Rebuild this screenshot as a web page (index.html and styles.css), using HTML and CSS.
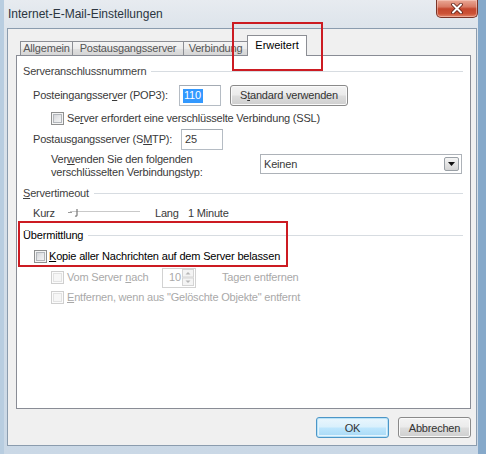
FILE: index.html
```html
<!DOCTYPE html>
<html lang="de">
<head>
<meta charset="utf-8">
<title>Internet-E-Mail-Einstellungen</title>
<link rel="stylesheet" href="styles.css">
</head>
<body>
<div class="window">
  <div class="titlebar">
    <span class="title">Internet-E-Mail-Einstellungen</span>
    <span class="close">
      <svg width="12" height="11" viewBox="0 0 12 11">
        <path d="M2 1.5 L10 9.5 M10 1.5 L2 9.5" stroke="#5a1d14" stroke-width="3.6" stroke-linecap="round"/>
        <path d="M2 1.5 L10 9.5 M10 1.5 L2 9.5" stroke="#ffffff" stroke-width="2" stroke-linecap="round"/>
      </svg>
    </span>
  </div>
  <div class="client">
    <div class="tabs">
      <div class="tab t1">Allgemein</div>
      <div class="tab t2">Postausgangsserver</div>
      <div class="tab t3">Verbindung</div>
      <div class="tab t4 active">Erweitert</div>
    </div>
    <div class="panel">
      <div class="group"><span>Serveranschlussnummern</span></div>

      <div class="row row-pop">
        <span class="lbl lbl-pop">Posteingangsser<u>v</u>er (POP3):</span>
        <span class="input"><span class="sel">110</span></span>
        <span class="btn btn-std">S<u>t</u>andard verwenden</span>
      </div>

      <div class="row row-check">
        <span class="cb"></span>
        <span>Se<u>r</u>ver erfordert eine verschlüsselte Verbindung (SSL)</span>
      </div>

      <div class="row row-smtp">
        <span class="lbl lbl-smtp">Postausgangsserver (S<u>M</u>TP):</span>
        <span class="input">25</span>
      </div>

      <div class="row row-enc">
        <span class="enc-text">Ver<u>w</u>enden Sie den folgenden<br>verschlüsselten Verbindungstyp:</span>
        <span class="combo">
          <span class="combo-val">Keinen</span>
          <span class="combo-btn">
            <svg width="7" height="4" viewBox="0 0 7 4"><path d="M0 0 H7 L3.5 4 Z" fill="#111"/></svg>
          </span>
        </span>
      </div>

      <div class="group gap-timeout"><span><u>S</u>ervertimeout</span></div>

      <div class="row row-slider">
        <span class="kurz">Kurz</span>
        <svg class="slider" width="72" height="14" viewBox="0 0 72 14">
          <line x1="2" y1="5.5" x2="72" y2="5.5" stroke="#c9c9c9" stroke-width="1"/>
          <line x1="0" y1="6.5" x2="4" y2="6.5" stroke="#9a9a9a" stroke-width="1"/>
          <path d="M9 3 V9 Q9 10.5 7 10" stroke="#777" stroke-width="1.2" fill="none"/>
        </svg>
        <span class="lang">Lang</span>
        <span class="minute">1 Minute</span>
      </div>

      <div class="group gap-ueb sharp"><span>Übermittlung</span></div>

      <div class="row row-kopie sharp">
        <span class="cb"></span>
        <span><u>K</u>opie aller Nachrichten auf dem Server belassen</span>
      </div>

      <div class="row row-vom disabled">
        <span class="cb cb-dis"></span>
        <span class="lbl-vom">Vom Server <u>n</u>ach</span>
        <span class="spin">
          <span class="spin-val">10</span>
          <svg class="spin-btns" width="12" height="17" viewBox="0 0 12 17">
            <rect x="0.5" y="0.5" width="11" height="7.5" fill="#f4f4f4" stroke="#d4d4d4"/>
            <rect x="0.5" y="9" width="11" height="7.5" fill="#f4f4f4" stroke="#d4d4d4"/>
            <path d="M3.5 5.5 L6 3 L8.5 5.5 Z" fill="#b5b5b5"/>
            <path d="M3.5 11.5 L6 14 L8.5 11.5 Z" fill="#b5b5b5"/>
          </svg>
        </span>
        <span class="tagen">Tagen entfernen</span>
      </div>

      <div class="row row-entf disabled">
        <span class="cb cb-dis"></span>
        <span><u>E</u>ntfernen, wenn aus "Gelöschte Objekte" entfernt</span>
      </div>
    </div>
    <div class="buttons">
      <span class="btn btn-ok">OK</span>
      <span class="btn">Abbrechen</span>
    </div>
  </div>
  <div class="mark mark-tab"></div>
  <div class="mark mark-ueb"></div>
</div>
</body>
</html>
```
FILE: styles.css
```css
* { box-sizing: border-box; }

body {
  margin: 0;
  font-family: "Liberation Sans", Arial, sans-serif;
  font-size: 11px;
  letter-spacing: -0.2px;
  color: #3a3a3a;
}

u { text-decoration: underline; text-underline-offset: 1px; }

.window {
  position: relative;
  width: 486px;
  height: 454px;
  padding: 0 9px 8px 7px;
  display: flex;
  flex-direction: column;
  background: linear-gradient(180deg, #e7ebf0 0, #dde4eb 28px, #cad8e6 100%);
  box-shadow: inset -8px 0 0 #86a9ca, inset 4px 0 0 #b8cde0;
}

.titlebar {
  height: 28px;
  display: flex;
  align-items: flex-start;
  padding-left: 1px;
}

.title {
  margin-top: 7px;
  font-size: 12px;
  line-height: 14px;
  letter-spacing: 0;
  color: #2b3540;
}

.close {
  margin-left: auto;
  margin-right: -1px;
  width: 42px;
  height: 18px;
  border: 1px solid #7a3428;
  border-top: none;
  border-radius: 0 0 5px 5px;
  background: linear-gradient(180deg, #eaa896 0, #d97a64 40%, #c4472e 52%, #cc5236 80%, #e3866a 100%);
  box-shadow: inset 0 0 0 1px rgba(255, 220, 210, 0.45);
  display: flex;
  align-items: center;
  justify-content: center;
}

.client {
  flex: 1;
  background: #f0f0f0;
  border: 1px solid #8b9cae;
  padding: 6px 0 6px 8px;
  display: flex;
  flex-direction: column;
}

.tabs {
  display: flex;
  align-items: flex-end;
  height: 20px;
  padding-left: 4px;
}

.tab {
  height: 14px;
  margin-right: -1px;
  border: 1px solid #8c8e94;
  border-bottom: none;
  background: linear-gradient(180deg, #f4f4f4 0, #ececec 50%, #e0e0e0 51%, #d6d6d6 100%);
  color: #555;
  line-height: 12px;
  text-align: center;
  white-space: nowrap;
}

.t1 { width: 53px; }
.t2 { width: 112px; }
.t3 { width: 65px; }
.t4 { width: 60px; }

.tab.active {
  height: 21px;
  margin-bottom: -1px;
  position: relative;
  z-index: 1;
  background: #ffffff;
  color: #000;
  letter-spacing: 0;
  line-height: 19px;
}

.panel {
  width: 455px;
  height: 354px;
  background: #ffffff;
  border: 1px solid #898c95;
  padding: 8px 7px 0 6px;
}

.group {
  display: flex;
  align-items: center;
  height: 14px;
  line-height: 14px;
  color: #3f3f3f;
}

.group::after {
  content: "";
  flex: 1;
  height: 1px;
  margin-left: 5px;
  background: #d7dce1;
}

.row {
  display: flex;
  align-items: center;
  line-height: 13px;
  white-space: nowrap;
}

.row-pop { height: 21px; margin-top: 7px; padding-left: 10px; }
.lbl-pop { width: 146px; }
.row-check { height: 14px; margin-top: 5px; padding-left: 28px; gap: 3px; }
.row-smtp { height: 21px; margin-top: 4px; padding-left: 10px; }
.lbl-smtp { width: 148px; }
.row-enc { height: 26px; margin-top: 3px; padding-left: 28px; align-items: flex-start; }
.gap-timeout { margin-top: 7px; }
.row-slider { height: 14px; margin-top: 6px; padding-left: 10px; }
.gap-ueb { margin-top: 8px; }
.row-kopie { height: 14px; margin-top: 7px; padding-left: 11px; gap: 2px; }
.row-vom { height: 21px; margin-top: 4px; padding-left: 28px; }
.row-entf { height: 14px; margin-top: 2px; padding-left: 28px; gap: 3px; }

.sharp { color: #000; letter-spacing: -0.17px; }
.disabled { color: #a9a9a9; }

.input {
  width: 42px;
  height: 21px;
  border: 1px solid #b5bcc4;
  border-top-color: #a4abb3;
  background: #fff;
  padding: 3px 0 0 3px;
  line-height: 13px;
}

.sel {
  display: inline-block;
  background: #3399ff;
  color: #fff;
  padding: 0 2px 1px 1px;
}

.btn {
  display: flex;
  align-items: center;
  justify-content: center;
  width: 73px;
  height: 21px;
  border: 1px solid #8a8a8a;
  border-radius: 3px;
  background: linear-gradient(180deg, #f3f3f3 0, #ebebeb 48%, #dddddd 52%, #cfcfcf 100%);
  box-shadow: inset 0 0 0 1px #fafafa;
  color: #333;
}

.btn-std { width: 118px; margin-left: 9px; }

.btn-ok {
  border-color: #4c96c7;
  background: linear-gradient(180deg, #eaf6fd 0, #d9f0fc 48%, #bee6fd 52%, #a7d9f5 100%);
  box-shadow: inset 0 0 0 1px #b9e2f7, inset 0 0 0 2px #e4f4fd;
}

.cb {
  width: 13px;
  height: 13px;
  flex: none;
  border: 1px solid #8e8f8f;
  background: linear-gradient(135deg, #c9cbcf 0, #e6e7e9 50%, #f9f9f9 100%);
  box-shadow: inset 0 0 0 1px #f4f4f4, inset 0 0 0 2px #b2b6bb;
}

.cb-dis {
  border-color: #cfcfcf;
  background: #f6f6f6;
  box-shadow: inset 0 0 0 1px #fbfbfb, inset 0 0 0 2px #e2e2e2;
}

.row-vom .cb { margin-right: 3px; }

.enc-text { width: 209px; line-height: 13px; }

.combo {
  display: flex;
  align-items: center;
  width: 202px;
  height: 20px;
  margin-top: 1px;
  border: 1px solid #adb2b8;
  background: #fff;
  padding: 0 2px 0 3px;
}

.combo-val { flex: 1; }

.combo-btn {
  width: 15px;
  height: 14px;
  border: 1px solid #9aa0a6;
  border-radius: 2px;
  background: linear-gradient(180deg, #f5f5f5 0, #e4e4e4 50%, #d4d4d4 100%);
  display: flex;
  align-items: center;
  justify-content: center;
}

.kurz { width: 35px; }
.lang { margin-left: 15px; width: 33px; }

.lbl-vom { width: 95px; }

.spin {
  display: flex;
  align-items: center;
  width: 34px;
  height: 20px;
  border: 1px solid #d2d2d2;
  background: #fff;
  padding: 0 1px 0 6px;
}

.spin-val { flex: 1; }

.tagen { margin-left: 26px; }

.buttons {
  display: flex;
  justify-content: flex-end;
  gap: 9px;
  width: 455px;
  margin-top: 8px;
}

.mark {
  position: absolute;
  border: 2px solid #cc1b22;
}

.mark-tab { left: 232px; top: 22px; width: 91px; height: 49px; }
.mark-ueb { left: 18px; top: 221px; width: 270px; height: 46px; }
```
